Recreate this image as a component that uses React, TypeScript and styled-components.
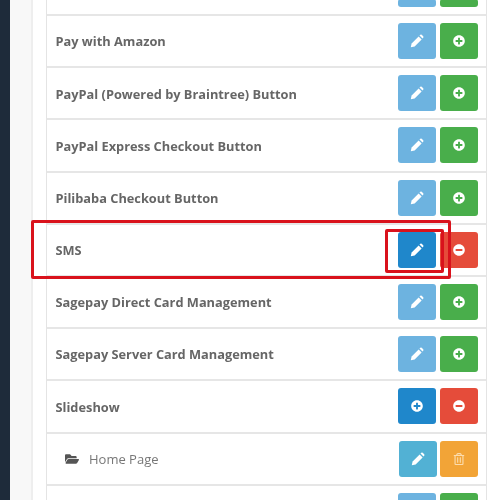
import React from 'react';
import styled, { createGlobalStyle } from 'styled-components';
import { FaPlusCircle, FaMinusCircle, FaRegTrashAlt, FaFolderOpen } from 'react-icons/fa';

const GlobalStyle = createGlobalStyle`
  html, body {
    margin: 0;
    padding: 0;
    background: #fff;
  }
`;

const Page = styled.div`
  position: relative;
  display: flex;
  width: 500px;
  height: 500px;
  overflow: hidden;
  background: #fff;
  font-family: "Open Sans", "Liberation Sans", sans-serif;
  filter: blur(0.35px);
`;

const Sidebar = styled.div`
  flex: 0 0 10px;
  background: #1e2b3a;
`;

const Gutter = styled.div`
  flex: 0 0 21px;
  background: #f8f8f8;
  border-right: 2px solid #eeeeee;
`;

const Content = styled.div`
  box-sizing: border-box;
  flex: 0 0 441px;
  margin-left: 13px;
  border-left: 1px solid #e4e4e4;
  border-right: 1px solid #e4e4e4;
`;

const Row = styled.div<{ $clipped?: boolean }>`
  box-sizing: border-box;
  display: flex;
  align-items: ${p => (p.$clipped ? 'flex-end' : 'center')};
  justify-content: space-between;
  height: ${p => (p.$clipped ? '16px' : '52.2px')};
  padding: 0 8px 0 8.5px;
  border-bottom: 2px solid #e6e6e6;
`;

const Name = styled.span`
  padding-top: 0.5px;
  font-size: 12.8px;
  font-weight: 700;
  color: #666666;
`;

const ChildName = styled.span`
  display: flex;
  align-items: center;
  gap: 10px;
  padding-left: 9.5px;
  font-size: 13px;
  color: #777777;

  svg {
    font-size: 14px;
    color: #555555;
  }
`;

const Actions = styled.div<{ $clipped?: boolean; $tight?: boolean }>`
  display: flex;
  gap: ${p => (p.$tight ? '3px' : '4px')};
  margin-bottom: ${p => (p.$clipped ? '7px' : '0')};
`;

const ActionButton = styled.div<{ $color: string; $clipped?: boolean; $faint?: boolean }>`
  display: flex;
  align-items: center;
  justify-content: center;
  width: 38px;
  height: ${p => (p.$clipped ? '8px' : '36px')};
  border-radius: 3px;
  background: ${p => p.$color};
  color: ${p => (p.$faint ? '#fbdcae' : '#fff')};
  font-size: 12px;
`;

const Highlight = styled.div`
  position: absolute;
  box-sizing: border-box;
  border: 3px solid #d9121c;
  border-radius: 2px;
  pointer-events: none;
`;

const OuterHighlight = styled(Highlight)`
  left: 31px;
  top: 220px;
  width: 420px;
  height: 59px;
`;

const InnerHighlight = styled(Highlight)`
  left: 385px;
  top: 229px;
  width: 59px;
  height: 44px;
`;

const BLUE_LIGHT = '#6db3e0';
const BLUE = '#1f87cb';
const GREEN = '#49ae4b';
const RED = '#e54c3a';
const CYAN = '#52b1d4';
const ORANGE = '#f2a437';

const rows = [
  { name: 'Pay with Amazon', edit: BLUE_LIGHT, action: GREEN, installed: false },
  { name: 'PayPal (Powered by Braintree) Button', edit: BLUE_LIGHT, action: GREEN, installed: false },
  { name: 'PayPal Express Checkout Button', edit: BLUE_LIGHT, action: GREEN, installed: false },
  { name: 'Pilibaba Checkout Button', edit: BLUE_LIGHT, action: GREEN, installed: false },
  { name: 'SMS', edit: BLUE, action: RED, installed: true },
  { name: 'Sagepay Direct Card Management', edit: BLUE_LIGHT, action: GREEN, installed: false },
  { name: 'Sagepay Server Card Management', edit: BLUE_LIGHT, action: GREEN, installed: false },
];

// chunky solid pencil, the package ones have too much inner detail at this size
const Pencil = () => (
  <svg width="14" height="14" viewBox="0 0 14 14" fill="currentColor">
    <path d="M0.8 13.2 L1.6 9.4 L8.6 2.4 L11.6 5.4 L4.6 12.4 Z" />
    <path d="M9.5 1.5 L10.3 0.8 Q11 0.2 11.7 0.8 L13.2 2.3 Q13.8 3 13.2 3.7 L12.5 4.5 Z" />
  </svg>
);

export default function App() {
  return (
    <Page>
      <GlobalStyle />
      <Sidebar />
      <Gutter />
      <Content>
        <Row $clipped>
          <span />
          <Actions $clipped>
            <ActionButton $color={BLUE_LIGHT} $clipped />
            <ActionButton $color={GREEN} $clipped />
          </Actions>
        </Row>
        {rows.map(row => (
          <Row key={row.name}>
            <Name>{row.name}</Name>
            <Actions>
              <ActionButton $color={row.edit}><Pencil /></ActionButton>
              <ActionButton $color={row.action}>
                {row.installed ? <FaMinusCircle /> : <FaPlusCircle />}
              </ActionButton>
            </Actions>
          </Row>
        ))}
        <Row>
          <Name>Slideshow</Name>
          <Actions>
            <ActionButton $color={BLUE}><FaPlusCircle /></ActionButton>
            <ActionButton $color={RED}><FaMinusCircle /></ActionButton>
          </Actions>
        </Row>
        <Row>
          <ChildName><FaFolderOpen />Home Page</ChildName>
          <Actions $tight>
            <ActionButton $color={CYAN}><Pencil /></ActionButton>
            <ActionButton $color={ORANGE} $faint><FaRegTrashAlt /></ActionButton>
          </Actions>
        </Row>
        <Row>
          <span />
          <Actions>
            <ActionButton $color={BLUE_LIGHT} />
            <ActionButton $color={GREEN} />
          </Actions>
        </Row>
      </Content>
      <OuterHighlight />
      <InnerHighlight />
    </Page>
  );
}
